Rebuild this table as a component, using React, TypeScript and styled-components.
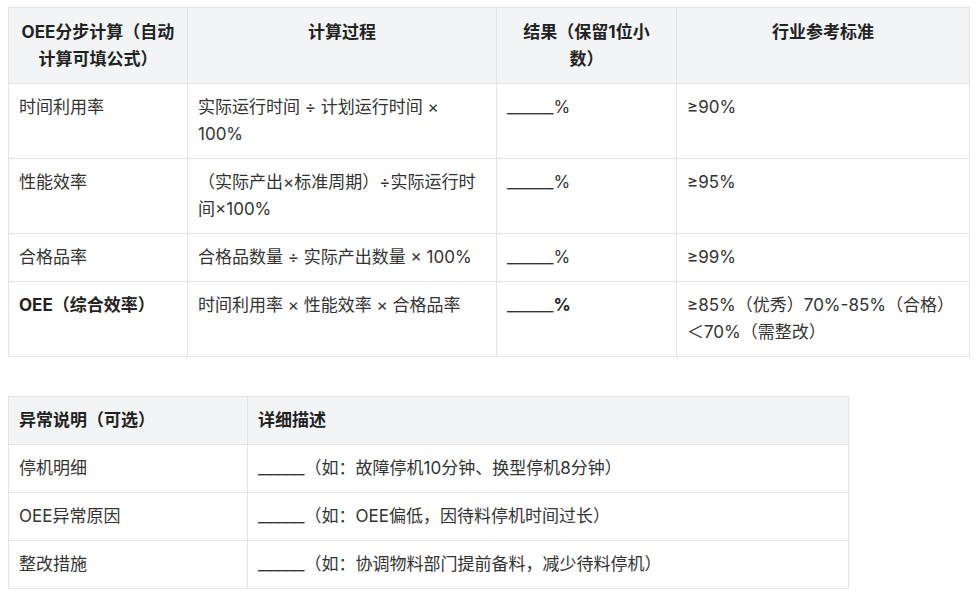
import React from "react";
import styled, { createGlobalStyle } from "styled-components";

const Global = createGlobalStyle`
  html, body { margin: 0; padding: 0; background: #ffffff; }
  body {
    padding: 7px 8px;
    font-family: Inter, "Liberation Sans", "Noto Sans CJK SC", sans-serif;
    color: #333333;
  }
`;

const Page = styled.div`
  display: flex;
  flex-direction: column;
  gap: 39px;
`;

const Table = styled.table<{ $width: number }>`
  width: ${(p) => p.$width}px;
  border-collapse: collapse;
  table-layout: fixed;
  font-size: 17px;
  line-height: 27px;
  text-spacing-trim: space-all;
`;

const Th = styled.th<{ $align?: string; $padTop?: number }>`
  background: #f3f4f6;
  border: 1px solid #e1e3e6;
  padding: ${(p) => p.$padTop ?? 10}px 10px 10px;
  font-weight: 700;
  color: #222222;
  text-align: ${(p) => p.$align || "center"};
  vertical-align: top;
`;

const Td = styled.td`
  border: 1px solid #e1e3e6;
  padding: 10px 10px;
  vertical-align: top;
  color: #333333;
  font-weight: 400;
`;

const Strong = styled.span`
  font-weight: 700;
  color: #222222;
`;

const Blank = styled.span`
  letter-spacing: 0;
`;

const rows1 = [
  { name: "时间利用率", calc: "实际运行时间 ÷ 计划运行时间 × 100%", std: "≥90%" },
  { name: "性能效率", calc: "（实际产出×标准周期）÷实际运行时间×100%", std: "≥95%" },
  { name: "合格品率", calc: "合格品数量 ÷ 实际产出数量 × 100%", std: "≥99%" },
];

const rows2 = [
  { name: "停机明细", desc: "（如：故障停机10分钟、换型停机8分钟）" },
  { name: "OEE异常原因", desc: "（如：OEE偏低，因待料停机时间过长）" },
  { name: "整改措施", desc: "（如：协调物料部门提前备料，减少待料停机）" },
];

export default function App() {
  return (
    <Page>
      <Global />
      <Table $width={961}>
        <colgroup>
          <col style={{ width: 179 }} />
          <col style={{ width: 309 }} />
          <col style={{ width: 180 }} />
          <col style={{ width: 293 }} />
        </colgroup>
        <thead>
          <tr>
            <Th $padTop={11}>OEE分步计算（自动计算可填公式）</Th>
            <Th $padTop={11}>计算过程</Th>
            <Th $padTop={11}>结果（保留1位小数）</Th>
            <Th $padTop={11}>行业参考标准</Th>
          </tr>
        </thead>
        <tbody>
          {rows1.map((r) => (
            <tr key={r.name}>
              <Td>{r.name}</Td>
              <Td>{r.calc}</Td>
              <Td>
                <Blank>______</Blank>%
              </Td>
              <Td>{r.std}</Td>
            </tr>
          ))}
          <tr>
            <Td>
              <Strong>OEE（综合效率）</Strong>
            </Td>
            <Td>时间利用率 × 性能效率 × 合格品率</Td>
            <Td>
              <Blank>______</Blank>
              <Strong>%</Strong>
            </Td>
            <Td>≥85%（优秀）70%-85%（合格）＜70%（需整改）</Td>
          </tr>
        </tbody>
      </Table>
      <Table $width={840}>
        <colgroup>
          <col style={{ width: 239 }} />
          <col style={{ width: 601 }} />
        </colgroup>
        <thead>
          <tr>
            <Th $align="left">异常说明（可选）</Th>
            <Th $align="left">详细描述</Th>
          </tr>
        </thead>
        <tbody>
          {rows2.map((r) => (
            <tr key={r.name}>
              <Td>{r.name}</Td>
              <Td>
                <Blank>______</Blank>
                {r.desc}
              </Td>
            </tr>
          ))}
        </tbody>
      </Table>
    </Page>
  );
}
